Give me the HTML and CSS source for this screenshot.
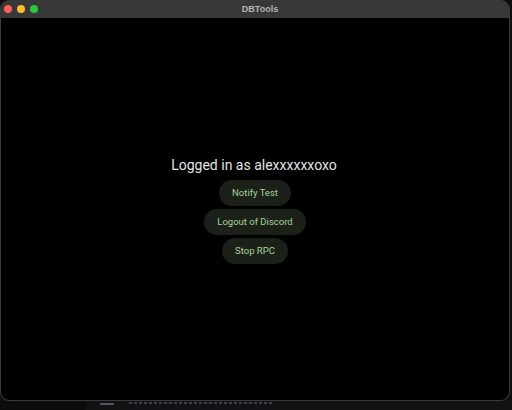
FILE: index.html
```html
<!DOCTYPE html>
<html>
<head>
<meta charset="utf-8">
<link rel="stylesheet" href="styles.css">
</head>
<body>
<div class="desk">
  <div class="window">
    <div class="titlebar">
      <div class="lights">
        <span class="light red"></span>
        <span class="light yellow"></span>
        <span class="light green"></span>
      </div>
      <div class="title">DBTools</div>
    </div>
    <div class="content">
      <div class="status">Logged in as alexxxxxxoxo</div>
      <button class="btn">Notify Test</button>
      <button class="btn">Logout of Discord</button>
      <button class="btn">Stop RPC</button>
    </div>
  </div>
  <div class="dock">
    <div class="dock-left"></div>
    <div class="dock-right">
      <span class="blob"></span>
      <span class="smudge"></span>
    </div>
  </div>
</div>
</body>
</html>
```
FILE: styles.css
```css
html, body {
  margin: 0;
  padding: 0;
  width: 512px;
  height: 410px;
  overflow: hidden;
  background: #0e0e10;
  font-family: Roboto, "Noto Sans", sans-serif;
}
.desk {
  width: 512px;
  height: 410px;
  display: flex;
  flex-direction: column;
}
.window {
  width: 510px;
  height: 401px;
  background: #000;
  border: 1px solid #3a3a3a;
  border-top: none;
  box-sizing: border-box;
  border-radius: 9px;
  overflow: hidden;
  display: flex;
  flex-direction: column;
  flex: none;
}
.titlebar {
  height: 18px;
  background: #383838;
  position: relative;
  display: flex;
  align-items: center;
  justify-content: center;
  flex: none;
}
.lights {
  position: absolute;
  left: 3px;
  top: 5px;
  display: flex;
  gap: 5px;
}
.light {
  width: 8px;
  height: 8px;
  border-radius: 50%;
  display: block;
}
.red { background: #fe5f57; }
.yellow { background: #febc2e; }
.green { background: #28c840; }
.title {
  color: #b5b5b5;
  font-family: "Liberation Sans", Arial, sans-serif;
  font-weight: bold;
  font-size: 9px;
  margin-left: 10px;
}
.content {
  flex: 1;
  display: flex;
  flex-direction: column;
  align-items: center;
  justify-content: center;
  padding-top: 4px;
}
.status {
  color: #e3e3e3;
  font-size: 14px;
  line-height: 18px;
  margin-bottom: 6px;
  margin-left: -2px;
}
.btn {
  background: #1b2118;
  color: #a6d19a;
  border: none;
  border-radius: 13px;
  height: 26px;
  padding: 0 13px;
  font-family: Roboto, sans-serif;
  font-size: 9.5px;
  margin-bottom: 3px;
}
.dock {
  flex: 1;
  display: flex;
}
.dock-left {
  width: 85px;
  background: #0b0b0c;
}
.dock-right {
  flex: 1;
  background: #111114;
  display: flex;
  align-items: flex-start;
  gap: 15px;
  padding-left: 15px;
  padding-top: 1px;
}
.blob {
  width: 14px;
  height: 2px;
  background: #555864;
  border-radius: 2px;
  margin-top: 1px;
}
.smudge {
  width: 145px;
  height: 2px;
  background: repeating-linear-gradient(90deg, #3e3f47 0 3px, transparent 3px 5px);
  filter: blur(0.4px);
}
```
